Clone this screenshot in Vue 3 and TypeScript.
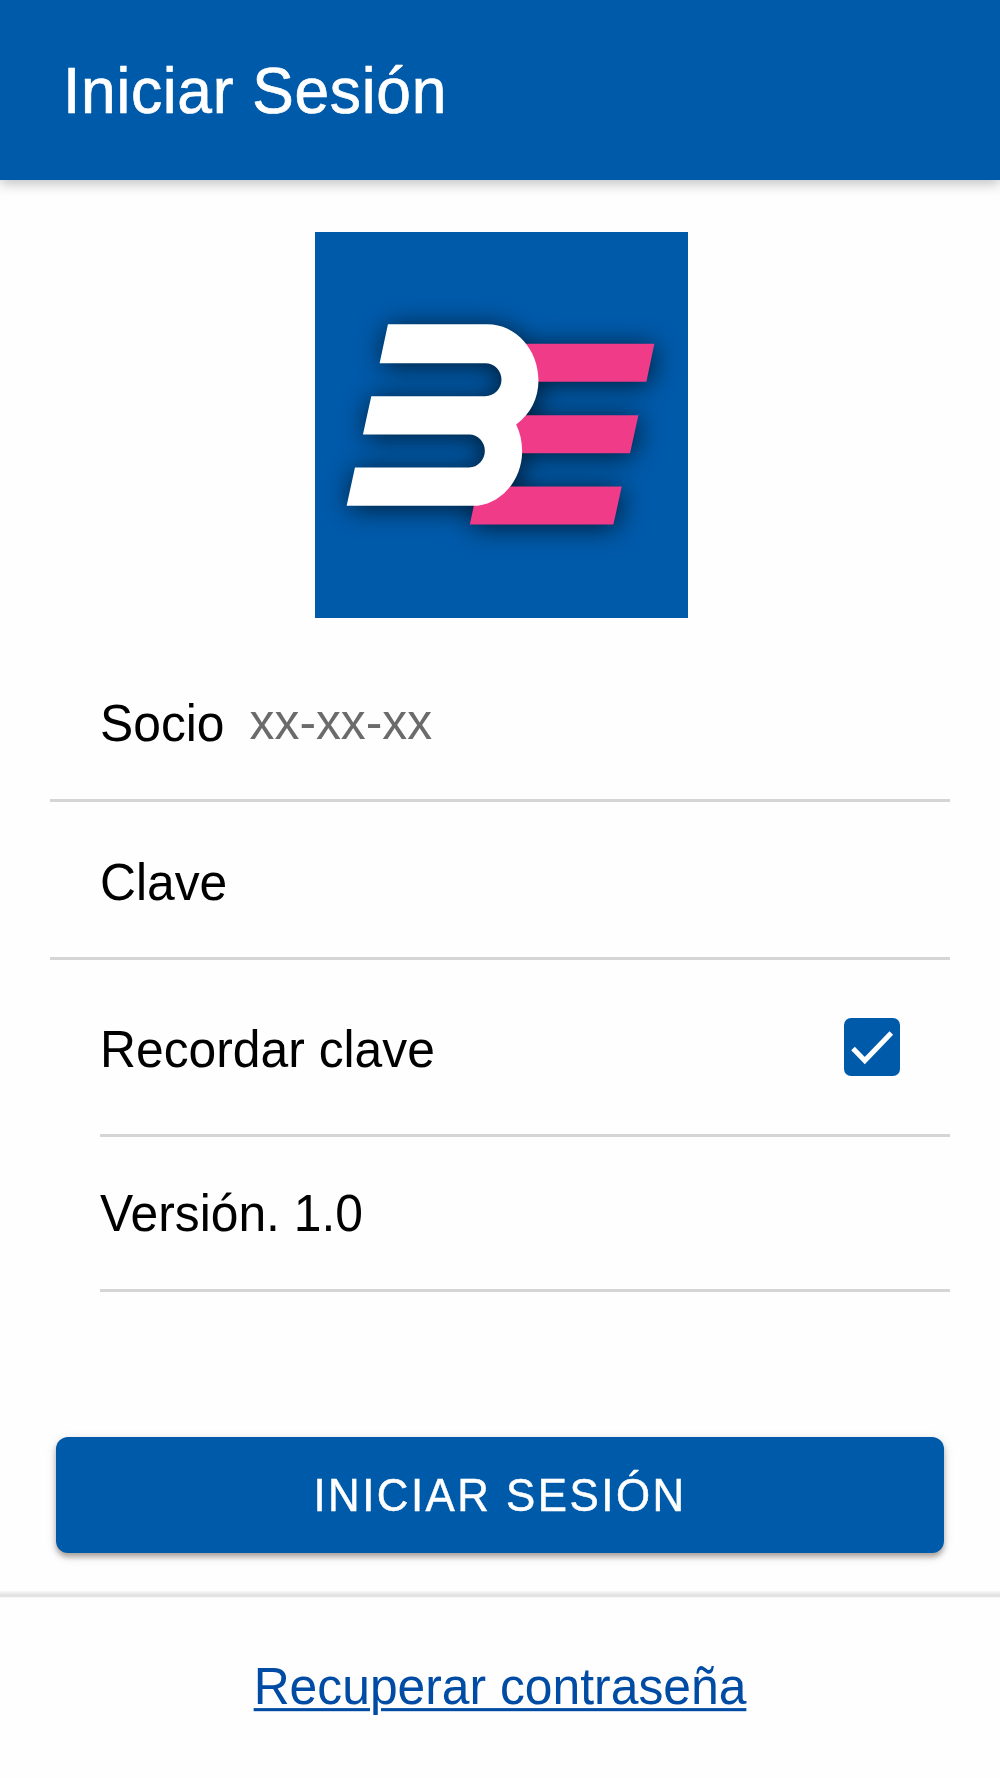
<script setup lang="ts">
import { ref } from 'vue'

const socio = ref<string>('')
const recordar = ref<boolean>(true)
</script>

<template>
  <div class="page">
    <header class="toolbar">
      <h1 class="title stretch">Iniciar Sesión</h1>
    </header>

    <main class="content">
      <svg class="logo" viewBox="44 37 1120 1158" preserveAspectRatio="none" role="img" aria-label="BE">
        <rect x="44" y="37" width="1120" height="1158" fill="#005aaa" />
        <g class="mark" transform="translate(0 1.5)">
          <path fill="#f03b89" d="M620 371H1063L1039 485H620ZM600 585H1015L990 699H600ZM533 799H965L940 913H509Z" />
          <path
            fill="#fff"
            d="M263 312H562C648 312 715 389 715 480C715 534 692 580 648 613C660 637 666 665 666 693C666 781 600 857 517 857H139L164 742H507C533 742 554 720 554 692C554 665 533 643 507 643H188L213 528H555C583 528 604 506 604 478C604 451 583 429 555 429H238Z"
          />
        </g>
      </svg>

      <div class="row row-socio">
        <span class="stretch">Socio</span>
        <span class="placeholder stretch">{{ socio || 'xx-xx-xx' }}</span>
      </div>
      <div class="row row-clave"><span class="stretch">Clave</span></div>
      <div class="row inset row-recordar" @click="recordar = !recordar">
        <span class="stretch">Recordar clave</span>
        <span class="checkbox" :class="{ checked: recordar }">
          <svg v-if="recordar" width="56" height="58" viewBox="0 0 56 58">
            <path d="M9 30.5L20.8 42.6L47.3 15" fill="none" stroke="#fff" stroke-width="5" />
          </svg>
        </span>
      </div>
      <div class="row inset row-version"><span class="stretch">Versión. 1.0</span></div>

      <button class="submit" type="button"><span class="stretch">INICIAR SESIÓN</span></button>
    </main>

    <footer class="footer">
      <a class="link stretch" href="#">Recuperar contraseña</a>
    </footer>
  </div>
</template>

<style>
body {
  margin: 0;
  background: #fff;
}
</style>

<style scoped>
.page {
  display: flex;
  flex-direction: column;
  width: 1000px;
  height: 1778px;
  overflow: hidden;
  background: #fefefe;
  color: #000;
  font-family: 'Liberation Sans', Arial, sans-serif;
  font-size: 49.8px;
  line-height: 1.2;
}
.stretch {
  display: inline-block;
  transform: translateY(3.5px) scaleY(1.03);
  white-space: nowrap;
}
.toolbar {
  display: flex;
  align-items: center;
  flex: none;
  height: 180px;
  padding-left: 63px;
  box-sizing: border-box;
  background: #005aaa;
  box-shadow: 0 4px 12px rgba(0, 0, 0, 0.24);
}
.title {
  margin: 0;
  color: #fff;
  font-size: 62.3px;
  font-weight: 400;
  letter-spacing: 0.0115em;
  transform: translateY(1px) scaleY(1.04);
  -webkit-text-stroke: 0.7px #fff;
}
.content {
  display: flex;
  flex-direction: column;
  flex: none;
  height: 1411px;
  padding: 52px 50px 0;
  box-sizing: border-box;
}
.logo {
  display: block;
  flex: none;
  width: 373px;
  height: 386px;
  margin: 0 0 25px 265px;
}
.mark {
  filter: drop-shadow(4px 8px 40px rgba(0, 0, 0, 0.7));
}
.row {
  display: flex;
  align-items: center;
  flex: none;
  box-sizing: border-box;
  padding: 0 50px;
  border-bottom: 3px solid #d5d5d5;
}
.row-socio {
  height: 159px;
}
.row-clave {
  height: 158px;
}
.inset {
  margin-left: 50px;
  padding-left: 0;
}
.row-recordar {
  justify-content: space-between;
  height: 177px;
}
.row-version {
  height: 155px;
  padding-bottom: 4px;
}
.placeholder {
  margin-left: 25px;
  color: #6b6b6b;
  transform: translateY(1.5px);
}
.checkbox {
  display: block;
  width: 56px;
  height: 58px;
  border-radius: 7px;
  background: #ddd;
}
.checkbox.checked {
  background: #005aaa;
}
.checkbox svg {
  display: block;
}
.submit {
  flex: none;
  height: 116px;
  margin: 144.5px 6px 0;
  padding: 0;
  border: 0;
  border-radius: 12px;
  background: #005aaa;
  box-shadow: 0 4px 5px rgba(60, 40, 30, 0.35), 0 3px 12px rgba(0, 0, 0, 0.12);
  color: #fff;
  font-family: inherit;
  font-size: 43.8px;
  letter-spacing: 0.057em;
}
.submit .stretch {
  transform: translateY(0) scaleY(1.05);
  -webkit-text-stroke: 0.5px #fff;
}
.footer {
  display: flex;
  align-items: center;
  justify-content: center;
  flex: 1;
  padding-bottom: 1px;
  background: linear-gradient(#f8f8f8, #dedede 5px, #fefefe 7px);
}
.link {
  color: #004ba3;
  text-decoration: underline;
  text-decoration-thickness: 3px;
  text-underline-offset: 4px;
}
</style>
